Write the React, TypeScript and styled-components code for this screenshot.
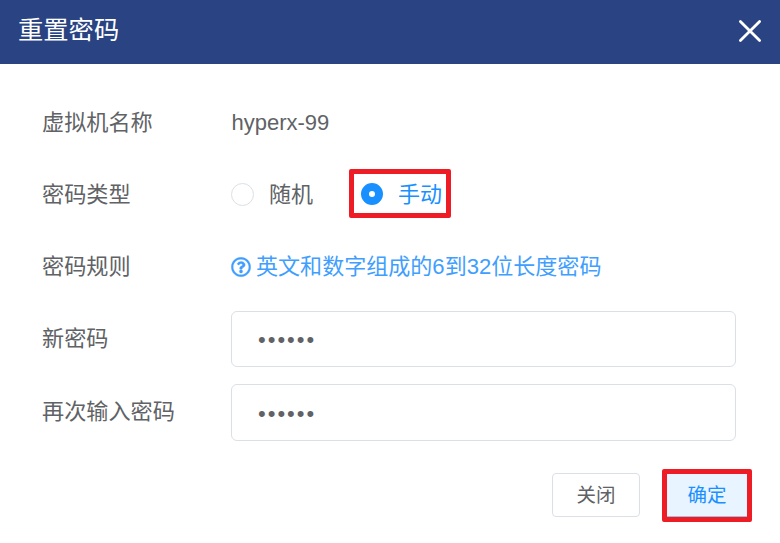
import React, { useState } from "react";
import styled, { createGlobalStyle } from "styled-components";
import { FaRegQuestionCircle } from "react-icons/fa";

const GlobalStyle = createGlobalStyle`
  * { box-sizing: border-box; }
  body {
    margin: 0;
    background: #fff;
    color: #606266;
    font: 22px/30px "Liberation Sans", "Noto Sans CJK SC", sans-serif;
  }
`;

const Dialog = styled.form`
  width: 780px;
  height: 543px;
  overflow: hidden;
  background: #fff;
`;

const Header = styled.header`
  display: flex;
  align-items: center;
  justify-content: space-between;
  height: 64px;
  padding: 0 18px;
  background: #294383;
  color: #fff;
`;

const Title = styled.h1`
  margin: 0;
  padding-bottom: 5px;
  font-size: 25.3px;
  font-weight: 400;
  line-height: 36px;
`;

const CloseButton = styled.button`
  display: flex;
  padding: 0;
  margin-top: -2px;
  border: 0;
  background: none;
  color: inherit;
`;

const Fields = styled.div`
  display: grid;
  grid-template-columns: 189px 505px;
  grid-template-rows: 72px 72px 73px 72px 75px;
  align-items: center;
  padding: 22px 0 0 42px;
`;

const Label = styled.label<{ $top?: number; $bottom?: number }>`
  padding-top: ${(p) => p.$top ?? 0}px;
  padding-bottom: ${(p) => p.$bottom ?? 0}px;
  font-size: 22.15px;
  white-space: nowrap;
`;

const Value = styled.span`
  padding: 2px 0 0 0.5px;
`;

const RadioGroup = styled.div`
  display: flex;
  align-items: center;
`;

const Highlight = styled.div<{ $width: number; $height: number }>`
  flex: none;
  display: flex;
  align-items: center;
  width: ${(p) => p.$width}px;
  height: ${(p) => p.$height}px;
  border: 5px solid #ee1c25;
  border-radius: 2px;
`;

const RadioOption = styled.label<{ $checked: boolean }>`
  display: flex;
  align-items: center;
  gap: 15px;
  color: ${(p) => (p.$checked ? "#1890ff" : "#606266")};
`;

const RadioText = styled.span`
  padding-top: 2px;
`;

const Radio = styled.input`
  appearance: none;
  width: 23px;
  height: 23px;
  margin: 0;
  border: 1px solid #dcdfe6;
  border-radius: 50%;
  background: #fff;
  &:checked {
    width: 22px;
    height: 22px;
    border: 8px solid #1890ff;
  }
`;

const RadioHighlight = styled(Highlight)`
  margin: -1px 0 0 36px;
  padding-left: 7px;
`;

const Rule = styled.div`
  display: flex;
  align-items: center;
  gap: 5px;
  color: #409eff;
  font-size: 22.05px;
  white-space: nowrap;
`;

const PasswordInput = styled.input<{ $height: number }>`
  width: 100%;
  height: ${(p) => p.$height}px;
  padding: 2px 25px 0 26px;
  border: 1px solid #dcdfe6;
  border-radius: 6px;
  outline: 0;
  background: #fff;
  color: #606266;
  font: inherit;
  letter-spacing: 2px;
`;

const Footer = styled.footer`
  display: flex;
  align-items: flex-start;
  justify-content: flex-end;
  gap: 22px;
  padding: 19px 28px 0 0;
`;

const Button = styled.button<{ $primary?: boolean }>`
  width: 88px;
  height: 44px;
  margin-top: 4px;
  padding: 0;
  border: 1px solid #dcdfe6;
  border-radius: 4px;
  background: #fff;
  color: #606266;
  font: inherit;
  font-size: 19.5px;
  ${(p) =>
    p.$primary &&
    `
    width: 100%;
    height: 100%;
    margin-top: 0;
    border-width: 0 0 1px;
    border-color: #a3bde0;
    border-radius: 0;
    background: #e8f4ff;
    color: #1890ff;
  `}
`;

export default function App() {
  const [mode, setMode] = useState("manual");
  const [password, setPassword] = useState("abc123");
  const [confirm, setConfirm] = useState("abc123");
  return (
    <>
      <GlobalStyle />
      <Dialog onSubmit={(e) => e.preventDefault()}>
        <Header>
          <Title>重置密码</Title>
          <CloseButton type="button" aria-label="关闭">
            <svg width="24" height="24" viewBox="0 0 24 24" fill="none" stroke="currentColor" strokeWidth="2.8" strokeLinecap="round">
              <path d="M2.4 2.4 21.6 21.6M21.6 2.4 2.4 21.6" />
            </svg>
          </CloseButton>
        </Header>
        <Fields>
          <Label $top={2}>虚拟机名称</Label>
          <Value>hyperx-99</Value>
          <Label $top={2}>密码类型</Label>
          <RadioGroup>
            <RadioOption $checked={mode === "random"}>
              <Radio type="radio" name="mode" checked={mode === "random"} onChange={() => setMode("random")} />
              <RadioText>随机</RadioText>
            </RadioOption>
            <RadioHighlight $width={102} $height={49}>
              <RadioOption $checked={mode === "manual"}>
                <Radio type="radio" name="mode" checked={mode === "manual"} onChange={() => setMode("manual")} />
                <RadioText>手动</RadioText>
              </RadioOption>
            </RadioHighlight>
          </RadioGroup>
          <Label>密码规则</Label>
          <Rule>
            <FaRegQuestionCircle size={20} stroke="currentColor" strokeWidth={8} />
            英文和数字组成的6到32位长度密码
          </Rule>
          <Label htmlFor="password">新密码</Label>
          <PasswordInput id="password" type="password" $height={56} value={password} onChange={(e) => setPassword(e.target.value)} />
          <Label $bottom={2} htmlFor="confirm">再次输入密码</Label>
          <PasswordInput id="confirm" type="password" $height={57} value={confirm} onChange={(e) => setConfirm(e.target.value)} />
        </Fields>
        <Footer>
          <Button type="button">关闭</Button>
          <Highlight $width={90} $height={53}>
            <Button type="submit" $primary>确定</Button>
          </Highlight>
        </Footer>
      </Dialog>
    </>
  );
}
